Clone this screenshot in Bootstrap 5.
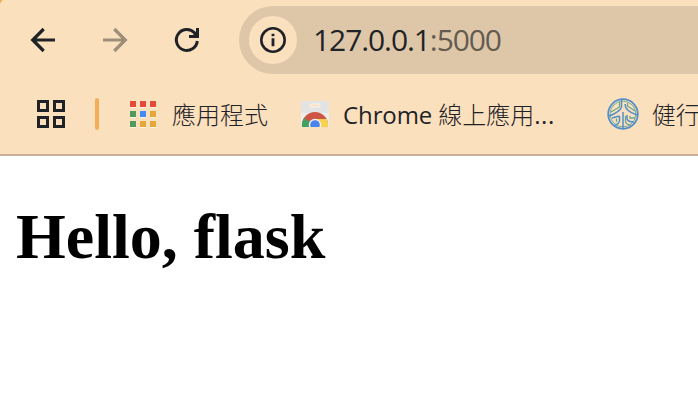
<!DOCTYPE html>
<html lang="zh-Hant">
<head>
<meta charset="utf-8">
<meta name="viewport" content="width=device-width, initial-scale=1">
<title>127.0.0.1:5000</title>
<link href="https://cdn.jsdelivr.net/npm/bootstrap@5.3.0/dist/css/bootstrap.min.css" rel="stylesheet">
<style>
body{font-family:"Open Sans","Noto Sans CJK TC",sans-serif;color:#1f2327}
svg{display:block;flex:none}
.chrome-top{background:#fbe0be;border-bottom:2px solid #c8b195;height:156px}
.corner{left:0;top:0}
.toolbar{height:80px;padding-left:25px}
.tool-icons{gap:36px;width:214px}
.omnibox{height:68px;background:#dec7a8;border-radius:34px 0 0 34px;padding-left:10px}
.site-info{width:48px;height:48px;background:#fbe0be}
.url{font-size:30px;line-height:40px;letter-spacing:-1.08px;margin-left:16px}
.port{color:#645b50}
.bookmarks{height:74px;padding:0 0 6px 36px;font-size:24px;line-height:32px}
.divider{width:4px;height:32px;background:#f3ae58;border-radius:2px;margin:0 30px 0 29px}
.cjk{font-family:"Noto Sans CJK TC",sans-serif;font-weight:300}
.latin{letter-spacing:-.1px}
.dots{letter-spacing:.5px}
.apps-label{margin-left:15px}
.store{margin-left:32px}
.store-label,.school-label{margin-left:13px}
.school{margin-left:52px}
.page-title{font:bold 64px/74px "Liberation Serif",serif;color:#000;margin:0;padding:44px 0 0 16px}
</style>
</head>
<body class="bg-white overflow-hidden">
<header class="chrome-top position-relative overflow-hidden">
  <svg class="corner position-absolute" width="4" height="4"><path d="M0 0H3Q1 1 0 4Z" fill="#f3ae58"/></svg>
  <nav class="toolbar d-flex align-items-center">
    <div class="tool-icons d-flex flex-shrink-0">
      <svg width="36" height="36" fill="none" stroke="#1f2327" stroke-width="3.2"><path d="M30 18H8M18.7 7L7.7 18L18.7 29"/></svg>
      <svg width="36" height="36" fill="none" stroke="#9d8d79" stroke-width="3.2"><path d="M6 18H28M17.3 7L28.3 18L17.3 29"/></svg>
      <svg width="36" height="36" fill="none" stroke="#1f2327" stroke-width="3"><path d="M28.3 19A10.5 10.5 0 1 1 25.5 10.8L28 14"/><path d="M20 14.5H28.5V6"/><path d="M23 14L28 9V14Z" fill="#1f2327" stroke="none"/></svg>
    </div>
    <div class="omnibox d-flex align-items-center flex-grow-1">
      <span class="site-info rounded-circle d-flex align-items-center justify-content-center flex-shrink-0">
        <svg width="28" height="28"><circle cx="14" cy="14" r="11.7" fill="none" stroke="#1f2327" stroke-width="2.6"/><path d="M12.6 12.3h2.8v8h-2.8zM12.6 7.8h2.8v2.5h-2.8z" fill="#1f2327"/></svg>
      </span>
      <span class="url text-nowrap">127.0.0.1<span class="port">:5000</span></span>
    </div>
  </nav>
  <div class="bookmarks d-flex align-items-center text-nowrap">
    <svg width="30" height="28" fill="none" stroke="#1f2327" stroke-width="3"><path d="M2.5 1.5h9v9h-9zM18.5 1.5h9v9h-9zM2.5 17.5h9v9h-9zM18.5 17.5h9v9h-9z"/></svg>
    <span class="divider flex-shrink-0"></span>
    <a class="apps d-flex align-items-center text-reset text-decoration-none" href="#">
      <svg width="28" height="28"><path d="M1 1h6v7H1zM11 1h6v7h-6zM21 1h6v7h-6zM1 11h6v7H1zM11 11h6v7h-6zM21 11h6v7h-6zM1 21h6v7H1zM11 21h6v7h-6zM21 21h6v7h-6z" fill="#fff3df"/><path d="M1 1h6v6H1zM11 1h6v6h-6zM21 1h6v6h-6z" fill="#e5493c"/><path d="M1 11h6v6H1zM1 21h6v6H1z" fill="#509b5c"/><path d="M11 11h6v6h-6z" fill="#438bf2"/><path d="M21 11h6v6h-6zM11 21h6v6h-6zM21 21h6v6h-6z" fill="#e7a63a"/></svg>
      <span class="cjk apps-label">應用程式</span>
    </a>
    <a class="store d-flex align-items-center text-reset text-decoration-none" href="#">
      <svg width="30" height="28" viewBox="0 0 30 28"><defs><clipPath id="bag"><path d="M1 1h28v26H1z"/></clipPath></defs>
        <path d="M1 1h28v26H1z" fill="#ededed"/><path d="M1 1h28v12H1z" fill="#e3e3e3"/><rect x="10" y="4" width="10" height="3" rx="1.5" fill="#fbe0be" stroke="#fff" stroke-width=".7"/>
        <g clip-path="url(#bag)"><circle cx="15" cy="25" r="13" fill="#ce5546"/><path d="M15 25L4 18A13 13 0 0 0 3 30H15Z" fill="#43a063"/><path d="M15 19H26.6A13 13 0 0 1 27 30H15Z" fill="#f8d24d"/><circle cx="15" cy="25" r="6.2" fill="#f1f1f1"/><circle cx="15" cy="25" r="4.8" fill="#4a83e9"/></g></svg>
      <span class="store-label"><span class="latin">Chrome </span><span class="cjk">線上應用</span><span class="dots">...</span></span>
    </a>
    <a class="school d-flex align-items-center text-reset text-decoration-none" href="#">
      <svg width="32" height="32" viewBox="0 0 32 32" fill="none"><circle cx="16" cy="16" r="14.8" stroke="#528fca" stroke-width="1.8"/><circle cx="16" cy="16" r="12.9" stroke="#70a58d" stroke-width=".9"/>
        <g stroke="#528fca" stroke-width="1.5"><path d="M14.5 2V9Q13 14 2 18M18 6Q18 13 30 17M16 14V30M12.5 18L5 20M12.5 18V23Q12 26 8 27M20 17V21Q21 24 27 24"/></g>
        <g stroke="#6ba58e" stroke-width="1.3"><path d="M12.5 4V9L4 14M20.5 5V8L28 13M9.5 20.5V24M18.5 18V24Q20 27 24 27M23 18V20H28"/></g></svg>
      <span class="cjk school-label">健行</span>
    </a>
  </div>
</header>
<main><h1 class="page-title">Hello, flask</h1></main>
<script src="https://cdn.jsdelivr.net/npm/bootstrap@5.3.0/dist/js/bootstrap.bundle.min.js"></script>
</body>
</html>
